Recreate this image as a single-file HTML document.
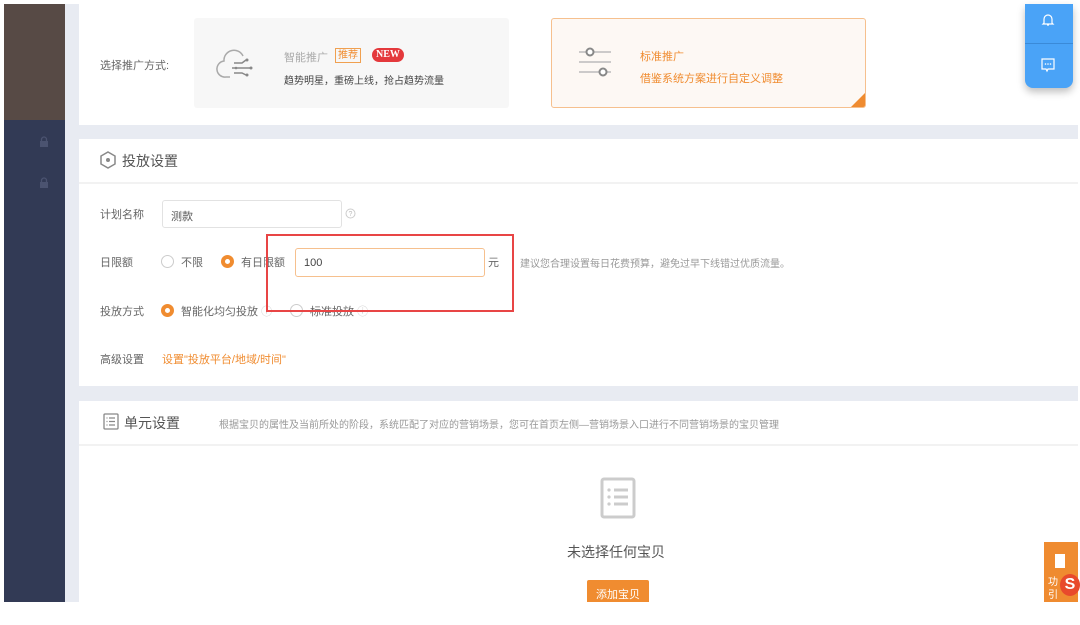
<!DOCTYPE html>
<html><head><meta charset="utf-8"><style>
*{margin:0;padding:0;box-sizing:border-box}
body{width:1080px;height:625px;background:#fff;position:relative;overflow:hidden;font-family:"Liberation Sans","Noto Sans CJK SC",sans-serif;color:#555}
.a{position:absolute}
.t{font-size:11px;color:#666;white-space:nowrap}
.radio{position:absolute;width:13px;height:13px;border-radius:50%;border:1px solid #ccc;background:#fff}
.radio.on{border:4px solid #f08c30}
</style></head><body>
<div class="a" style="left:65px;top:4px;width:1013px;height:598px;background:#e8ebf2"></div>
<div class="a" style="left:4px;top:4px;width:61px;height:116px;background:#574a45"></div>
<div class="a" style="left:4px;top:120px;width:61px;height:482px;background:#323a55"></div>
<svg class="a" style="left:38px;top:136px" width="12" height="12"><rect x="2" y="5" width="8" height="6" fill="#4b5370"/><path d="M3.5 5V3.5a2.5 2.5 0 0 1 5 0V5" stroke="#4b5370" stroke-width="1.3" fill="none"/></svg>
<svg class="a" style="left:38px;top:177px" width="12" height="12"><rect x="2" y="5" width="8" height="6" fill="#4b5370"/><path d="M3.5 5V3.5a2.5 2.5 0 0 1 5 0V5" stroke="#4b5370" stroke-width="1.3" fill="none"/></svg>

<!-- panel 1 -->
<div class="a" style="left:79px;top:4px;width:999px;height:121px;background:#fff"></div>
<div class="a t" style="left:100px;top:57px">选择推广方式:</div>
<div class="a" style="left:194px;top:18px;width:315px;height:90px;background:#f7f7f7;border-radius:3px"></div>
<svg class="a" style="left:212px;top:46px" width="50" height="36" viewBox="0 0 50 36"><path d="M18 31H14a8 8 0 0 1-2-16 10 10 0 0 1 19-5" stroke="#aaa" stroke-width="1.5" fill="none"/><path d="M22 17h8l4-3M20 22h18M22 27h8l4 2" stroke="#888" stroke-width="1.5" fill="none"/><circle cx="35" cy="14" r="1.5" fill="#888"/><circle cx="39" cy="22" r="1.5" fill="#888"/><circle cx="35" cy="29" r="1.5" fill="#888"/><circle cx="24" cy="22" r="1.3" fill="#888"/></svg>
<div class="a t" style="left:284px;top:49px;color:#aaa;font-size:11px">智能推广</div>
<div class="a" style="left:335px;top:48px;border:1px solid #f0a050;color:#f08c30;font-size:10px;padding:0 2px;line-height:13px">推荐</div>
<div class="a" style="left:372px;top:48px;background:#e4393c;color:#fff;font-size:10px;font-family:'Liberation Serif',serif;font-weight:bold;border-radius:8px;padding:0 4px;line-height:14px">NEW</div>
<div class="a t" style="left:284px;top:72px;color:#444;font-size:10px">趋势明星，重磅上线，抢占趋势流量</div>
<div class="a" style="left:551px;top:18px;width:315px;height:90px;background:#fdf8f4;border:1px solid #f6c08e;border-radius:3px;overflow:hidden"><div class="a" style="right:-1px;bottom:-1px;width:0;height:0;border-left:16px solid transparent;border-bottom:16px solid #ef8b30"></div></div>
<svg class="a" style="left:576px;top:46px" width="40" height="34" viewBox="0 0 40 34"><path d="M3 6h32M3 16h32M3 26h32" stroke="#bbb" stroke-width="1.5"/><circle cx="14" cy="6" r="3.5" fill="#fff" stroke="#888" stroke-width="2"/><circle cx="27" cy="26" r="3.5" fill="#fff" stroke="#888" stroke-width="2"/></svg>
<div class="a t" style="left:640px;top:48px;color:#f08c30">标准推广</div>
<div class="a t" style="left:640px;top:70px;color:#f08c30">借鉴系统方案进行自定义调整</div>

<!-- float -->
<div class="a" style="left:1025px;top:4px;width:48px;height:84px;background:#4aa3f7;border-radius:0 0 8px 8px;box-shadow:0 4px 8px rgba(0,0,0,.25)"></div>
<div class="a" style="left:1025px;top:43px;width:48px;height:1px;background:#3a8ad8"></div>
<svg class="a" style="left:1040px;top:12px" width="16" height="16"><path d="M4 11V7a4 4 0 0 1 8 0v4l1 1H3z M7 13h2" stroke="#fff" stroke-width="1.2" fill="none"/></svg>
<svg class="a" style="left:1040px;top:57px" width="16" height="16"><path d="M2 2h12v10H8l-1 2-1-2H2z" stroke="#fff" stroke-width="1.2" fill="none"/><circle cx="5.5" cy="7" r=".8" fill="#fff"/><circle cx="8" cy="7" r=".8" fill="#fff"/><circle cx="10.5" cy="7" r=".8" fill="#fff"/></svg>

<!-- panel 2 -->
<div class="a" style="left:79px;top:139px;width:999px;height:247px;background:#fff"></div>
<div class="a" style="left:79px;top:182px;width:999px;height:2px;background:#f2f2f2"></div>
<svg class="a" style="left:99px;top:150px" width="18" height="20"><path d="M9 2l7 4v8l-7 4-7-4V6z" stroke="#888" stroke-width="1.5" fill="none"/><circle cx="9" cy="10" r="2" fill="#888"/></svg>
<div class="a" style="left:122px;top:151px;font-size:14px;color:#555">投放设置</div>
<div class="a t" style="left:100px;top:206px">计划名称</div>
<div class="a" style="left:162px;top:200px;width:180px;height:28px;border:1px solid #e2e2e2;border-radius:3px;font-size:11px;color:#555;padding:7px 8px">测款</div>
<svg class="a" style="left:345px;top:208px" width="11" height="11"><circle cx="5.5" cy="5.5" r="4.5" stroke="#ccc" fill="none"/><text x="5.5" y="8" font-size="7" text-anchor="middle" fill="#bbb">?</text></svg>
<div class="a t" style="left:100px;top:254px">日限额</div>
<div class="radio" style="left:161px;top:255px"></div>
<div class="a t" style="left:181px;top:254px">不限</div>
<div class="radio on" style="left:221px;top:255px"></div>
<div class="a t" style="left:241px;top:254px">有日限额</div>
<div class="a" style="left:295px;top:248px;width:190px;height:29px;border:1px solid #f6c08e;border-radius:3px;font-size:11px;color:#444;padding:8px 8px">100</div>
<div class="a t" style="left:488px;top:254px">元</div>
<div class="a t" style="left:520px;top:255px;color:#999;font-size:10px">建议您合理设置每日花费预算，避免过早下线错过优质流量。</div>
<div class="a t" style="left:100px;top:303px">投放方式</div>
<div class="radio on" style="left:161px;top:304px"></div>
<div class="a t" style="left:181px;top:303px">智能化均匀投放 <span style="color:#ccc">ⓘ</span></div>
<div class="radio" style="left:290px;top:304px"></div>
<div class="a t" style="left:310px;top:303px">标准投放 <span style="color:#ccc">ⓘ</span></div>
<div class="a" style="left:266px;top:234px;width:248px;height:78px;border:2px solid #e84545"></div>
<div class="a t" style="left:100px;top:351px">高级设置</div>
<div class="a t" style="left:162px;top:351px;color:#f08c30">设置"投放平台/地域/时间"</div>

<!-- panel 3 -->
<div class="a" style="left:79px;top:401px;width:999px;height:201px;background:#fff"></div>
<div class="a" style="left:79px;top:444px;width:999px;height:2px;background:#f2f2f2"></div>
<svg class="a" style="left:103px;top:413px" width="16" height="17"><rect x="1" y="1" width="14" height="15" rx="1" stroke="#888" stroke-width="1.3" fill="none"/><path d="M6 5h6M6 8.5h6M6 12h6M3.5 5h1M3.5 8.5h1M3.5 12h1" stroke="#888" stroke-width="1.2"/></svg>
<div class="a" style="left:124px;top:413px;font-size:14px;color:#555">单元设置</div>
<div class="a t" style="left:219px;top:416px;color:#999;font-size:10px">根据宝贝的属性及当前所处的阶段，系统匹配了对应的营销场景，您可在首页左侧—营销场景入口进行不同营销场景的宝贝管理</div>
<svg class="a" style="left:600px;top:477px" width="38" height="42"><rect x="2" y="2" width="32" height="38" rx="2" stroke="#ccc" stroke-width="3" fill="none"/><path d="M14 13h14M14 20h14M14 27h14" stroke="#ccc" stroke-width="3"/><circle cx="9" cy="13" r="1.6" fill="#ccc"/><circle cx="9" cy="20" r="1.6" fill="#ccc"/><circle cx="9" cy="27" r="1.6" fill="#ccc"/></svg>
<div class="a" style="left:561px;top:542px;width:110px;text-align:center;font-size:14px;color:#555">未选择任何宝贝</div>
<div class="a" style="left:587px;top:580px;width:62px;height:22px;background:#f08c30;border-radius:2px 2px 0 0;color:#fff;font-size:11px;text-align:center;padding-top:6px">添加宝贝</div>
<div class="a" style="left:1044px;top:542px;width:34px;height:60px;background:#ef8b30"></div>
<div class="a" style="left:1055px;top:554px;width:10px;height:14px;background:#fff"></div>
<div class="a" style="left:1048px;top:576px;color:#fff;font-size:10px;line-height:13px">功<br>引</div>
<div class="a" style="left:1060px;top:574px;width:20px;height:22px;background:#e84a2c;border-radius:50%;color:#fff;font-weight:bold;font-size:16px;text-align:center;line-height:22px">S</div>
</body></html>
